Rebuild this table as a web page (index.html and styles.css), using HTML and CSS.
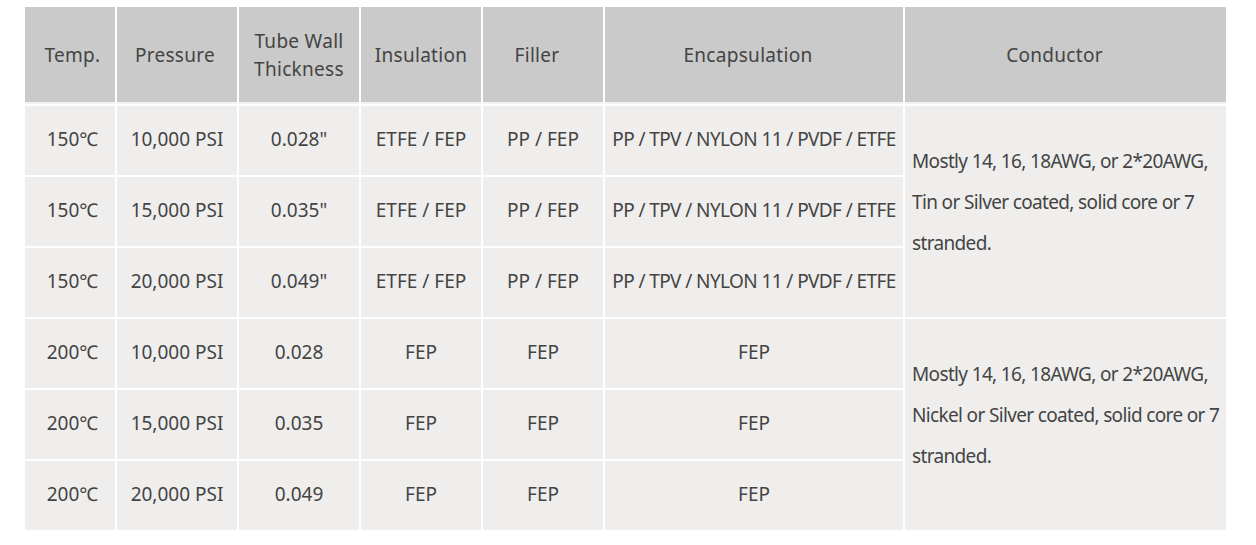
FILE: index.html
```html
<!DOCTYPE html>
<html>
<head>
<meta charset="utf-8">
<link rel="stylesheet" href="styles.css">
</head>
<body>
<table class="spec">
  <colgroup>
    <col class="c-temp"><col class="c-std"><col class="c-std"><col class="c-std"><col class="c-std"><col class="c-enc"><col class="c-cond">
  </colgroup>
  <thead>
    <tr>
      <th class="h-temp">Temp.</th>
      <th class="h-press">Pressure</th>
      <th>Tube Wall<br>Thickness</th>
      <th>Insulation</th>
      <th class="h-fill">Filler</th>
      <th class="h-enc">Encapsulation</th>
      <th class="h-cond">Conductor</th>
    </tr>
  </thead>
  <tbody>
    <tr>
      <td class="temp">150℃</td><td>10,000 PSI</td><td>0.028"</td><td>ETFE / FEP</td><td>PP / FEP</td><td class="enc">PP / TPV / NYLON 11 / PVDF / ETFE</td>
      <td class="cond" rowspan="3">Mostly 14, 16, 18AWG, or 2*20AWG, Tin or Silver coated, solid core or 7 stranded.</td>
    </tr>
    <tr>
      <td class="temp">150℃</td><td>15,000 PSI</td><td>0.035"</td><td>ETFE / FEP</td><td>PP / FEP</td><td class="enc">PP / TPV / NYLON 11 / PVDF / ETFE</td>
    </tr>
    <tr>
      <td class="temp">150℃</td><td>20,000 PSI</td><td>0.049"</td><td>ETFE / FEP</td><td>PP / FEP</td><td class="enc">PP / TPV / NYLON 11 / PVDF / ETFE</td>
    </tr>
    <tr>
      <td class="temp">200℃</td><td>10,000 PSI</td><td>0.028</td><td>FEP</td><td>FEP</td><td>FEP</td>
      <td class="cond" rowspan="3">Mostly 14, 16, 18AWG, or 2*20AWG, Nickel or Silver coated, solid core or 7 stranded.</td>
    </tr>
    <tr>
      <td class="temp">200℃</td><td>15,000 PSI</td><td>0.035</td><td>FEP</td><td>FEP</td><td>FEP</td>
    </tr>
    <tr>
      <td class="temp">200℃</td><td>20,000 PSI</td><td>0.049</td><td>FEP</td><td>FEP</td><td>FEP</td>
    </tr>
  </tbody>
</table>
</body>
</html>
```
FILE: styles.css
```css
html, body {
  margin: 0;
  padding: 0;
  background: #ffffff;
}
body {
  padding: 5px 0 0 23px;
  font-family: "Noto Sans", "Open Sans", sans-serif;
  color: #444444;
}
.spec {
  border-collapse: separate;
  border-spacing: 2px;
  table-layout: fixed;
  width: 1205px;
}
.c-temp { width: 90px; }
.c-std { width: 120px; }
.c-enc { width: 298px; }
.c-cond { width: 321px; }
.spec th {
  background: #c9cac9;
  height: 95px;
  font-weight: normal;
  font-size: 19px;
  letter-spacing: 0.3px;
  line-height: 28px;
  text-align: center;
  vertical-align: middle;
  padding: 0;
  border-bottom: 2px solid #f2f2f2;
}
.spec th.h-temp { padding-left: 5px; }
.spec th.h-press { padding-right: 4px; }
.spec th.h-fill { padding-right: 12px; }
.spec th.h-enc { padding-right: 12px; }
.spec th.h-cond { padding-right: 22px; }
.spec td {
  background: #efeeec;
  height: 69px;
  font-size: 19px;
  line-height: 28px;
  text-align: center;
  vertical-align: middle;
  padding: 0 0 4px 0;
  box-sizing: border-box;
  white-space: nowrap;
}
.spec td.temp {
  padding-left: 5px;
}
.spec td.enc {
  letter-spacing: -0.6px;
}
.spec td.cond {
  text-align: left;
  white-space: normal;
  line-height: 41px;
  padding: 0 0 18px 7px;
  letter-spacing: -0.65px;
}
```
